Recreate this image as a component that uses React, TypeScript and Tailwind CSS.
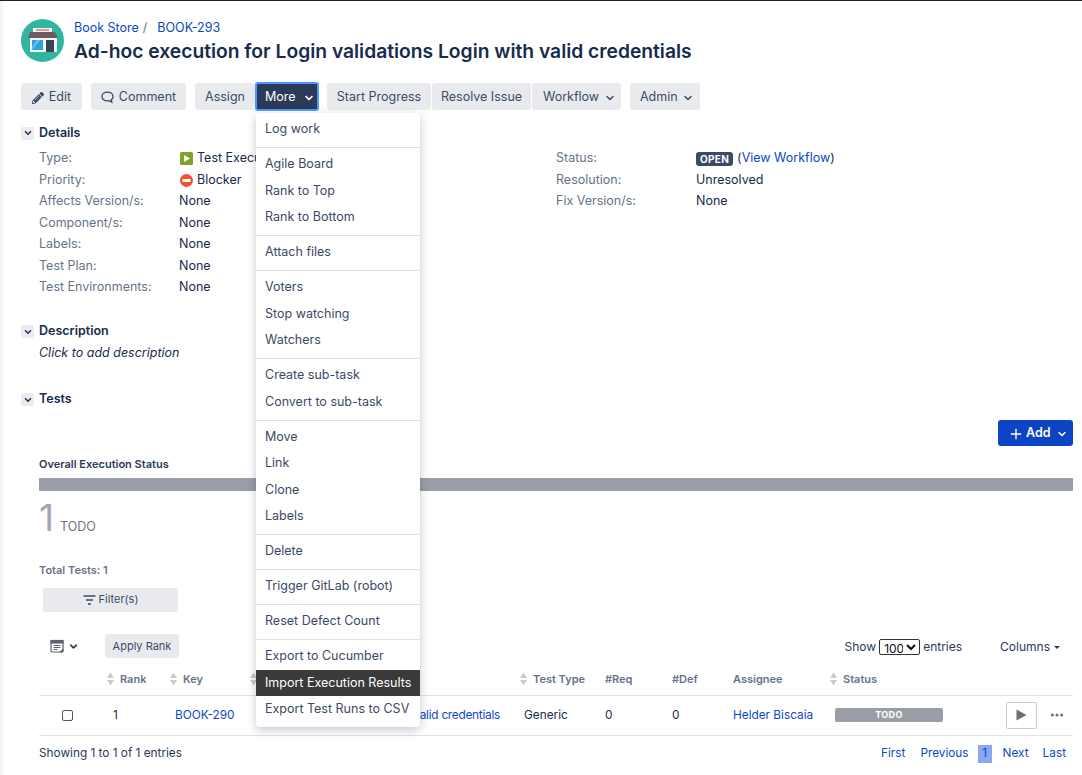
import { ChevronDown, MoreHorizontal, Plus } from "lucide-react";
import { FaPencilAlt } from "react-icons/fa";

const link = "text-[#0b49c4]";

function Avatar() {
    return (
        <svg width="43" height="43" viewBox="0 0 43 43" className="shrink-0">
            <circle cx="21.5" cy="21.5" r="21.5" fill="#2fb5a0" />
            <rect x="12" y="9" width="19" height="4" fill="#f3f4f4" />
            <rect x="15" y="10.3" width="13" height="1.4" fill="#e2736e" />
            <path d="M9 13h25l3 6H7z" fill="#6d5a62" />
            <rect x="9" y="19" width="27" height="14" fill="#f4f6f7" />
            <rect x="11" y="21" width="11" height="10" fill="#2aa3e0" />
            <path d="M11 28l5-7h3l-8 10z" fill="#6cc4ee" />
            <rect x="25" y="21" width="8" height="12" fill="#3a4256" />
        </svg>
    );
}

function Btn({ children, className = "" }: { children: React.ReactNode; className?: string }) {
    return (
        <button className={`flex h-[27px] items-center justify-center rounded-[3px] bg-[#e9eaee] pt-[2px] text-[12.5px] text-[#3b4a66] ${className}`}>
            {children}
        </button>
    );
}

function Toolbar() {
    return (
        <div className="mt-[18px] flex h-[29px] items-center">
            <Btn className="w-[61px] gap-[5px]">
                <FaPencilAlt className="h-[12px] w-[12px] text-[#3b4a66]" />
                Edit
            </Btn>
            <Btn className="ml-[9px] w-[95px] gap-[5px]">
                <svg width="13" height="13" viewBox="0 0 13 13" fill="none" stroke="#3b4a66" strokeWidth="1.3">
                    <path d="M6.5 1.2c3 0 5.5 1.7 5.5 4.3 0 1.500-.8 2.700-1.800 3.400l.6 2.300-2.600-1.500c-.5.1-1.100.2-1.700.2C3.500 10.100 1 8.100 1 5.500 1 2.900 3.500 1.200 6.500 1.200z" />
                </svg>
                Comment
            </Btn>
            <Btn className="ml-[9px] w-[60px]">Assign</Btn>
            <div className="relative">
                <button className="flex h-[29px] w-[64px] items-center gap-[7px] rounded-[3px] border-2 border-[#4c9aff] bg-[#2b3a58] pt-[2px] pl-[8px] text-[12.5px] text-white">
                    More
                    <ChevronDown size={12} strokeWidth={3.5} />
                </button>
                <MoreMenu />
            </div>
            <Btn className="ml-[8px] w-[104px]">Start Progress</Btn>
            <Btn className="ml-[1px] w-[99px]">Resolve Issue</Btn>
            <Btn className="ml-[1px] w-[89px] justify-start gap-[5px] pl-[11px]">
                Workflow
                <ChevronDown size={12} strokeWidth={3} />
            </Btn>
            <Btn className="ml-[9px] w-[70px] justify-start gap-[4px] pl-[10px]">
                Admin
                <ChevronDown size={12} strokeWidth={3} />
            </Btn>
        </div>
    );
}

const menuGroups = [
    ["Log work"],
    ["Agile Board", "Rank to Top", "Rank to Bottom"],
    ["Attach files"],
    ["Voters", "Stop watching", "Watchers"],
    ["Create sub-task", "Convert to sub-task"],
    ["Move", "Link", "Clone", "Labels"],
    ["Delete"],
    ["Trigger GitLab (robot)"],
    ["Reset Defect Count"],
    ["Export to Cucumber", "Import Execution Results", "Export Test Runs to CSV"],
];

function MoreMenu() {
    return (
        <div className="absolute left-[1px] top-[31px] z-10 w-[164px] rounded-[4px] bg-white shadow-[0_3px_10px_rgba(9,30,66,0.25)]">
            {menuGroups.map((group, i) => (
                <div key={i} className={`pt-[3px] pb-[4.5px] ${i > 0 ? "border-t border-[#dfe1e6]" : ""}`}>
                    {group.map((item) => (
                        <div
                            key={item}
                            className={`flex h-[26.5px] items-center whitespace-nowrap pt-[1px] pl-[9px] text-[12.5px] ${
                                item === "Import Execution Results" ? "bg-[#3a3a3a] text-white" : "text-[#3b4a66]"
                            }`}
                        >
                            {item}
                        </div>
                    ))}
                </div>
            ))}
        </div>
    );
}

function SectionHeading({ title, className = "" }: { title: string; className?: string }) {
    return (
        <div className={`flex h-[14px] items-center gap-[5px] ${className}`}>
            <span className="flex h-[13px] w-[13px] items-center justify-center rounded-[2px] bg-[#ebecf0] text-[#2b3a58]">
                <ChevronDown size={10} strokeWidth={4} />
            </span>
            <h2 className="text-[12.5px] font-semibold text-[#172b4d]">{title}</h2>
        </div>
    );
}

function Field({ label, children }: { label: string; children: React.ReactNode }) {
    return (
        <div className="flex h-[21.5px] items-center text-[12.5px]">
            <span className="w-[140px] shrink-0 text-[#66738a]">{label}</span>
            <span className="flex items-center whitespace-nowrap text-[#172b4d]">{children}</span>
        </div>
    );
}

function Details() {
    return (
        <div className="mt-[8px] flex pl-[18px]">
            <div className="w-[517px]">
                <Field label="Type:">
                    <svg width="13" height="13" viewBox="0 0 13 13" className="mr-[4px] ml-[1px]">
                        <rect width="13" height="13" rx="1.500" fill="#7ba428" />
                        <path d="M4 3l6 3.500L4 10z" fill="#fff" />
                    </svg>
                    Test Execution
                </Field>
                <Field label="Priority:">
                    <svg width="13" height="13" viewBox="0 0 13 13" className="mr-[4px] ml-[1px]">
                        <circle cx="6.500" cy="6.500" r="6.500" fill="#f4512c" />
                        <rect x="2.500" y="5" width="8" height="3" fill="#fff" />
                    </svg>
                    Blocker
                </Field>
                <Field label="Affects Version/s:">None</Field>
                <Field label="Component/s:">None</Field>
                <Field label="Labels:">None</Field>
                <Field label="Test Plan:">None</Field>
                <Field label="Test Environments:">None</Field>
            </div>
            <div>
                <Field label="Status:">
                    <span className="mr-[4px] rounded-[3px] bg-[#3b4a69] px-[4px] text-[10px] leading-[14px] font-bold tracking-[0.3px] text-white">OPEN</span>
                    <span>(</span>
                    <span className={link}>View Workflow</span>
                    <span>)</span>
                </Field>
                <Field label="Resolution:">Unresolved</Field>
                <Field label="Fix Version/s:">None</Field>
            </div>
        </div>
    );
}

function SortIcon() {
    return (
        <svg width="7" height="14" viewBox="0 0 7 14" className="shrink-0" fill="#c8cacf">
            <path d="M3.500 0.500L7 6H0z" />
            <path d="M3.500 13.500L7 8H0z" />
        </svg>
    );
}

const gridCols = "grid grid-cols-[66px_63px_80px_270px_85px_67px_63px_95px_172px_73px]";

function HeadCell({ title, sort, className = "pl-[2px]" }: { title?: string; sort?: boolean; className?: string }) {
    return (
        <div className={`flex items-center gap-[6px] text-[11px] font-semibold text-[#66738a] ${className}`}>
            {sort && <SortIcon />}
            {title}
        </div>
    );
}

function TestsTable() {
    return (
        <div>
            <div className={`${gridCols} h-[32px] border-b border-[#dfe1e6]`}>
                <div />
                <HeadCell title="Rank" sort />
                <HeadCell title="Key" sort />
                <HeadCell sort />
                <HeadCell title="Test Type" sort />
                <HeadCell title="#Req" />
                <HeadCell title="#Def" />
                <HeadCell title="Assignee" className="pl-0" />
                <HeadCell title="Status" sort />
                <div />
            </div>
            <div className={`${gridCols} h-[40px] items-center border-b border-[#dfe1e6] text-[11.8px] text-[#172b4d]`}>
                <div className="flex pl-[23px]">
                    <span className="h-[11px] w-[11px] rounded-[2px] border border-[#555]" />
                </div>
                <div className="pt-[2px] pl-[8px]">1</div>
                <div className={`pt-[2px] pl-[7px] ${link}`}>BOOK-290</div>
                <div className={`flex justify-end whitespace-nowrap pt-[2px] pr-[18px] tracking-[-0.25px] ${link}`}>Login validations Login with valid credentials</div>
                <div className="pt-[2px] pl-[6px]">Generic</div>
                <div className="pt-[2px] pl-[2px]">0</div>
                <div className="pt-[2px] pl-[2px]">0</div>
                <div className={`pt-[2px] ${link}`}>Helder Biscaia</div>
                <div className="pl-[7px]">
                    <div className="flex h-[14px] w-[108px] items-center justify-center rounded-[2px] bg-[#9a9ea6] text-[9px] font-bold tracking-[0.4px] text-white">TODO</div>
                </div>
                <div className="flex items-center gap-[12px] pl-[6px]">
                    <span className="flex h-[27px] w-[31px] items-center justify-center rounded-[2px] border border-[#c9ccd1]">
                        <svg width="11" height="12" viewBox="0 0 11 12">
                            <path d="M0.500 0.500L10.500 6 0.500 11.500z" fill="#6b6f76" />
                        </svg>
                    </span>
                    <MoreHorizontal size={16} strokeWidth={2.500} className="text-[#5e6c84]" />
                </div>
            </div>
        </div>
    );
}

function Tests() {
    return (
        <div className="pl-[18px]">
            <div className="mt-[13px] flex justify-end">
                <button className="flex h-[26px] w-[75px] items-center gap-[2px] rounded-[3px] bg-[#0c44c4] pt-[2px] pl-[10px] text-[12.5px] font-semibold text-white">
                    <Plus size={16} strokeWidth={2} />
                    Add
                    <ChevronDown size={12} strokeWidth={3} className="ml-[3px]" />
                </button>
            </div>
            <div className="mt-[11px] text-[11px] leading-[14px] font-semibold text-[#2b3a58]">Overall Execution Status</div>
            <div className="mt-[7px] h-[13px] bg-[#9a9ea6]" />
            <div className="mt-[7px] flex h-[40px] items-baseline">
                <span className="text-[37px] leading-[40px] font-normal text-[#a3a8b0]">1</span>
                <span className="ml-[6px] text-[12.5px] leading-[15px] text-[#70757e]">TODO</span>
            </div>
            <div className="mt-[25px] text-[11px] leading-[14px] font-semibold text-[#66738a]">Total Tests: 1</div>
            <button className="mt-[11px] ml-[4px] flex h-[24px] w-[135px] items-center justify-center gap-[3px] rounded-[3px] bg-[#e9eaee] text-[11px] text-[#3b4a66]">
                <svg width="13" height="10" viewBox="0 0 13 10" fill="none" stroke="#3b4a66" strokeWidth="1.300">
                    <path d="M0.500 1h12M3 5h7M5 9h3" />
                </svg>
                Filter(s)
            </button>
            <div className="mt-[23px] flex h-[23px] items-center justify-between">
                <div className="flex items-center">
                    <svg width="15" height="15" viewBox="0 0 15 15" fill="none" stroke="#5e6370" strokeWidth="1.200" className="ml-[11px]">
                        <rect x="1" y="1.500" width="12" height="11.500" rx="1" />
                        <rect x="1" y="1.500" width="12" height="2.500" fill="#5e6370" />
                        <path d="M3.500 6.500h7M3.500 8.500h7M3.500 10.500h4" />
                        <path d="M10.500 13.500l3-3" strokeWidth="1.800" />
                    </svg>
                    <ChevronDown size={11} strokeWidth={3.500} className="ml-[3px] text-[#2b3a58]" />
                    <button className="ml-[26px] flex h-[24px] w-[74px] items-center justify-center rounded-[3px] bg-[#e9eaee] text-[11px] text-[#3b4a66]">Apply Rank</button>
                </div>
                <div className="flex items-center pt-[2px] pr-[13px] text-[12px] text-[#2b3a58]">
                    Show
                    <select defaultValue="100" className="mx-[3px] h-[16px] w-[41px] rounded-[2px] border border-[#333] p-0 text-[12px] leading-none text-[#111]">
                        <option>100</option>
                    </select>
                    entries
                    <span className="ml-[38px] flex items-center gap-[4px]">
                        Columns
                        <span className="mt-[1px] h-0 w-0 border-x-[3.5px] border-t-[3.5px] border-x-transparent border-t-[#2b3a58]" />
                    </span>
                </div>
            </div>
            <div className="mt-[6px]">
                <TestsTable />
            </div>
            <div className="mt-[9px] flex h-[18px] items-center justify-between text-[11.8px]">
                <span className="text-[#2b3a58]">Showing 1 to 1 of 1 entries</span>
                <span className={`mr-[7px] flex items-center ${link}`}>
                    <span>First</span>
                    <span className="ml-[15px]">Previous</span>
                    <span className="ml-[9px] flex h-[18px] w-[14px] items-center justify-center bg-[#8aa6f5]">1</span>
                    <span className="ml-[11px]">Next</span>
                    <span className="ml-[14px]">Last</span>
                </span>
            </div>
        </div>
    );
}

export default function App() {
    return (
        <div className="h-[775px] w-[1082px] overflow-hidden border-t border-[#222] bg-white font-['Inter',sans-serif]">
            <div className="flex h-full">
                <div className="w-[3px] shrink-0 bg-[#f4f5f7]" />
                <main className="w-full pt-[18px] pl-[18px] pr-[9px]">
                    <div className="flex items-start gap-[10px]">
                        <Avatar />
                        <div>
                            <div className="flex h-[18px] items-center text-[12.5px] text-[#5e6c84]">
                                <span className={link}>Book Store</span>
                                <span className="ml-[4px]">/</span>
                                <span className={`ml-[10px] ${link}`}>BOOK-293</span>
                            </div>
                            <h1 className="mt-[1px] text-[19.25px] leading-[26px] font-semibold whitespace-nowrap text-[#172b4d]">
                                Ad-hoc execution for Login validations Login with valid credentials
                            </h1>
                        </div>
                    </div>
                    <Toolbar />
                    <SectionHeading title="Details" className="mt-[15px]" />
                    <Details />
                    <SectionHeading title="Description" className="mt-[26px]" />
                    <div className="mt-[6px] pl-[18px] text-[12.5px] leading-[16px] text-[#172b4d] italic">Click to add description</div>
                    <SectionHeading title="Tests" className="mt-[32px]" />
                    <Tests />
                </main>
            </div>
        </div>
    );
}
